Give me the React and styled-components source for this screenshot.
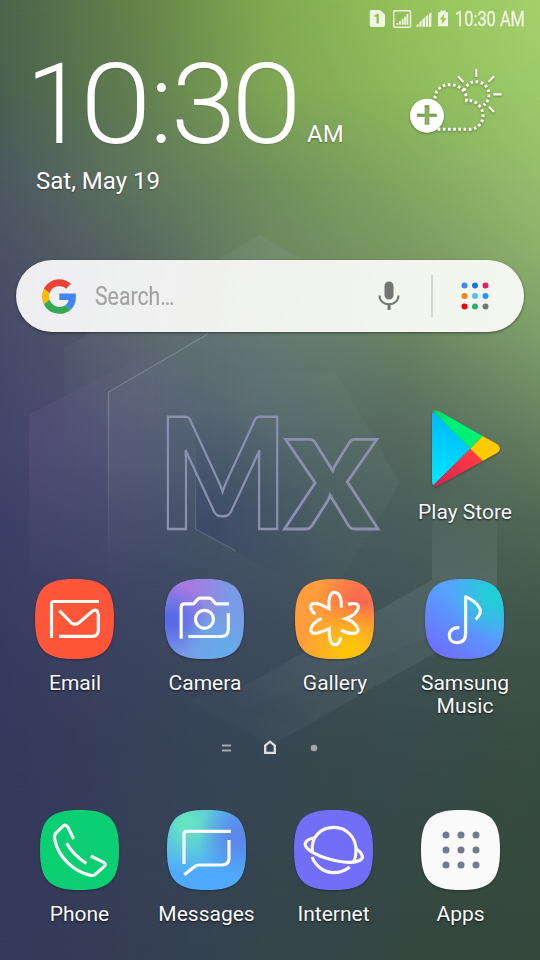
import React from 'react';
import styled, { createGlobalStyle } from 'styled-components';

const GlobalStyle = createGlobalStyle`
  *, *::before, *::after { box-sizing: border-box; }
  body { margin: 0; font-family: Roboto, "Liberation Sans", sans-serif; color: #fff; }
  svg { display: block; flex: none; overflow: visible; }
`;

/* ---------- page shell ---------- */

const Phone = styled.div`
  display: grid;
  width: 540px;
  height: 960px;
  overflow: hidden;
  isolation: isolate;
`;

const Wallpaper = styled.div`
  grid-area: 1 / 1;
  display: grid;
  width: 540px;
  height: 960px;
`;

const Band = styled.div`
  grid-area: 1 / 1;
  background: linear-gradient(to right, ${(p) => p.$colors.join(', ')});
  mask-image: linear-gradient(
    to bottom,
    ${(p) => (p.$from === null ? '#000, #000' : `transparent ${p.$from}px, #000 ${p.$to}px`)}
  );
`;

const WallpaperArt = styled.svg`
  grid-area: 1 / 1;
  z-index: 1;
`;

const Screen = styled.main`
  grid-area: 1 / 1;
  z-index: 2;
  display: flex;
  flex-direction: column;
  width: 540px;
  height: 960px;
`;

/* Colours across the width, at the height where the band is fully opaque. */
const bands = [
  { y: 0, colors: ['#4c644c', '#648349', '#81aa50', '#95c25b', '#a5d16c'] },
  { y: 90, colors: ['#4b614f', '#617f50', '#7fa654', '#8eba5a', '#9dca69'] },
  { y: 180, colors: ['#4c5862', '#5f755d', '#70905c', '#82a860', '#95bd6c'] },
  { y: 260, colors: ['#4b5065', '#576560', '#6b8762', '#799863', '#8cae6b'] },
  { y: 345, colors: ['#48486a', '#535d69', '#5b716b', '#678062', '#7b9b69'] },
  { y: 430, colors: ['#45456c', '#4c536e', '#52656a', '#576b60', '#65805f'] },
  { y: 520, colors: ['#3d3f68', '#444c6a', '#475966', '#4a5e5b', '#4f6853'] },
  { y: 620, colors: ['#383c63', '#3c4562', '#3e4d5e', '#405456', '#41574a'] },
  { y: 740, colors: ['#35395d', '#374159', '#384753', '#384b4b', '#384d42'] },
  { y: 960, colors: ['#34385a', '#353f55', '#34454b', '#344840', '#34483b'] },
];

function Background() {
  return (
    <Wallpaper aria-hidden="true">
      {bands.map((b, i) => (
        <Band key={b.y} $colors={b.colors} $from={i ? bands[i - 1].y : null} $to={b.y} />
      ))}
      <WallpaperArt width="540" height="960" viewBox="0 0 540 960" fill="none">
        <defs>
          <radialGradient id="fadeA" cx="200" cy="300" r="220" gradientUnits="userSpaceOnUse">
            <stop stopColor="#c0d4cc" stopOpacity=".09" />
            <stop offset=".5" stopColor="#b0c0cc" stopOpacity=".07" />
            <stop offset="1" stopColor="#8f9fc0" stopOpacity="0" />
          </radialGradient>
          <linearGradient id="fadeB" x1="29" y1="0" x2="200" y2="0" gradientUnits="userSpaceOnUse">
            <stop stopColor="#7c5f9c" stopOpacity=".2" />
            <stop offset="1" stopColor="#7c80a0" stopOpacity="0" />
          </linearGradient>
          <linearGradient id="fadeC" x1="108" y1="0" x2="230" y2="0" gradientUnits="userSpaceOnUse">
            <stop stopColor="#8fa3ae" stopOpacity=".08" />
            <stop offset="1" stopColor="#8fa3ae" stopOpacity="0" />
          </linearGradient>
          <linearGradient id="maskB" x1="0" y1="340" x2="0" y2="590" gradientUnits="userSpaceOnUse">
            <stop stopColor="#fff" />
            <stop offset=".5" stopColor="#fff" />
            <stop offset="1" stopColor="#000" />
          </linearGradient>
          <mask id="mB" maskUnits="userSpaceOnUse" x="0" y="200" width="540" height="500">
            <rect y="200" width="540" height="500" fill="url(#maskB)" />
          </mask>
          <linearGradient id="edge" x1="0" y1="330" x2="0" y2="560" gradientUnits="userSpaceOnUse">
            <stop stopColor="#b8c8c0" stopOpacity=".3" />
            <stop offset=".35" stopColor="#b8c8c0" stopOpacity=".3" />
            <stop offset="1" stopColor="#b8c8c0" stopOpacity="0" />
          </linearGradient>
          <linearGradient id="innerEdge" x1="0" y1="440" x2="0" y2="529" gradientUnits="userSpaceOnUse">
            <stop stopColor="#9aaab8" stopOpacity="0" />
            <stop offset="1" stopColor="#9aaab8" stopOpacity=".35" />
          </linearGradient>
          <radialGradient id="innerDark" cx="200" cy="525" r="120" gradientUnits="userSpaceOnUse">
            <stop stopColor="#303a68" stopOpacity=".32" />
            <stop offset="1" stopColor="#303a68" stopOpacity="0" />
          </radialGradient>
          <linearGradient id="innerLight" x1="250" y1="470" x2="370" y2="415" gradientUnits="userSpaceOnUse">
            <stop stopColor="#7c9a84" stopOpacity="0" />
            <stop offset="1" stopColor="#7c9a84" stopOpacity=".1" />
          </linearGradient>
          <linearGradient id="strap" x1="0" y1="490" x2="0" y2="575" gradientUnits="userSpaceOnUse">
            <stop stopColor="#8fa0a8" stopOpacity="0" />
            <stop offset="1" stopColor="#8fa0a8" stopOpacity=".19" />
          </linearGradient>
          <linearGradient id="strapLow" x1="490" y1="570" x2="230" y2="700" gradientUnits="userSpaceOnUse">
            <stop stopColor="#8fa0a8" stopOpacity=".19" />
            <stop offset=".7" stopColor="#8fa0a8" stopOpacity=".13" />
            <stop offset="1" stopColor="#8fa0a8" stopOpacity=".02" />
          </linearGradient>
        </defs>
        <path d="M260 235 64 348V580L260 700 456 580V348Z" fill="url(#fadeA)" />
        <g mask="url(#mB)">
          <path d="M29 415 250 300V620H29Z" fill="url(#fadeB)" />
          <path d="M108 392 230 322V620H108Z" fill="url(#fadeC)" />
        </g>
        <path d="M208 334 108.500 392V560" stroke="url(#edge)" strokeWidth="1.200" />
        <path d="M195.500 373H336L400 483 340 550 272 572 195.500 529Z" fill="url(#innerDark)" />
        <path d="M195.500 373H336L400 483 340 580 272 572 195.500 529Z" fill="url(#innerLight)" />
        <path d="M195.500 440V529L236 551" stroke="url(#innerEdge)" />
        <path d="M432 490H497V580H432Z" fill="url(#strap)" />
        <path d="M432 580H497V618L270 746 190 700 230 694Z" fill="url(#strapLow)" />
        <path d="M432 636 V655L300 728 240 710Z" fill="#303c48" opacity=".07" />
        <g
          fill="none"
          stroke="#8a90ae"
          strokeWidth="2.500"
          fontFamily="Lato"
          fontWeight="900"
          fontSize="157"
          strokeLinejoin="miter"
        >
          <text x="0" y="0" transform="translate(157.500 528.500) scale(.87 .985)">M</text>
          <text x="0" y="0" transform="translate(284.500 528.500) scale(1.120 1.100)">x</text>
        </g>
      </WallpaperArt>
    </Wallpaper>
  );
}

/* ---------- status bar ---------- */

const StatusBar = styled.header`
  display: flex;
  align-items: center;
  height: 38px;
  padding-left: 369px;
  color: #eff6e3;
`;

const StatusIcons = styled.div`
  display: flex;
  align-items: center;
  width: 86px;
`;

const Narrow = styled.span`
  display: inline-block;
  white-space: nowrap;
  transform: scaleX(${(p) => p.$scale});
  transform-origin: left center;
`;

const StatusTime = styled(Narrow)`
  font-size: 20px;
  line-height: 24px;
  -webkit-text-stroke: 0.3px #eff6e3;
`;

function StatusGlyphs() {
  return (
    <svg width="86" height="20" viewBox="0 0 86 20" fill="#eff6e3">
      <path fillRule="evenodd" d="M2.500 1H11L16 5.500V16Q16 18 14 18H2.500Q.7 18 .7 16V3Q.7 1 2.500 1ZM5.500 6V8L7.500 7.400V14.500H9.800V5H8.500Z" />
      <rect x="24.700" y="1.700" width="16.800" height="16.600" rx="1.500" fill="none" stroke="#eff6e3" strokeWidth="1.400" />
      <path d="M27.500 15.700V14H29.200V15.700ZM30 15.700V12.200H31.900V15.700ZM32.700 15.700V9.800H34.600V15.700ZM35.200 15.700V7.500H36.900V15.700ZM37.500 15.700V5H39.300V15.700Z" />
      <path d="M47.500 17.700V16L49.500 14.800V17.700ZM50.300 17.700V13.200L52.700 11.500V17.700ZM53.500 17.700V10.200L56 8.300V17.700ZM56.800 17.700V7.600L59.200 5.700V17.700ZM60 17.700V5L62.400 3.200V17.700Z" />
      <path fillRule="evenodd" d="M71.500 2V1.500H76.500V3.200H79V17.300H69V3.200H71.500ZM75.300 4.500 70.700 10.500H73.500L72.500 15.500 77.500 9.200H74.600Z" />
    </svg>
  );
}

/* ---------- clock and weather ---------- */

const ClockWidget = styled.section`
  display: flex;
  justify-content: space-between;
  height: 222px;
  padding: 0 38.5px 0 27px;
  text-shadow: 0 1px 2px rgba(0, 0, 0, 0.35);
`;

const ClockColumn = styled.div`
  display: flex;
  flex-direction: column;
`;

const TimeRow = styled.div`
  display: flex;
  align-items: baseline;
  height: 126px;
`;

const Time = styled.span`
  display: flex;
  width: 280px;
  padding-top: 2px;
  font-size: 110px;
  font-weight: 200;
  line-height: 130px;
  white-space: nowrap;
  -webkit-text-stroke: 1.9px #fff;
`;

const Digit = styled.span`
  flex: none;
  width: ${(p) => p.$width}px;
  transform: scaleX(${(p) => p.$stretch});
  transform-origin: left center;
`;

const Meridiem = styled.span`
  font-size: 24px;
`;

const DateText = styled.span`
  padding-left: 9px;
  font-size: 24px;
  line-height: 34px;
`;

const WeatherIcon = styled.svg`
  margin-top: 30px;
  filter: drop-shadow(0 1px 1px rgba(0, 0, 0, 0.35));
`;

const clockDigits = [
  { glyph: '1', width: 54, stretch: 0.95 },
  { glyph: '0', width: 70, stretch: 1.15 },
  { glyph: ':', width: 21, stretch: 1 },
  { glyph: '3', width: 60, stretch: 1.04 },
  { glyph: '0', width: 74, stretch: 1.14 },
];

function Weather() {
  return (
    <WeatherIcon width="92" height="66" viewBox="149 204 276 198" fill="none" stroke="#fff">
      <g strokeWidth="9" strokeDasharray="8 7.500">
        <path d="M224 296C225 268 246 253 270 254 290 254 308 266 316 282 318 290 319 296 319 302 340 298 367 316 368 346 369 370 350 388 326 388H232" />
        <path d="M311 272C318 254 332 245 347 245 371 245 386 264 386 284 386 298 380 309 370 315" />
      </g>
      <path strokeWidth="6.500" d="M348 207V231M293 229 309 246M401 229 385 245M399 283H424M386 320 401 336" />
      <path
        fill="#fff"
        stroke="none"
        fillRule="evenodd"
        d="M200 296A51 51 0 1 1 199.900 296ZM193 316V341H170V351H193V374H207V351H229V341H207V316Z"
      />
    </WeatherIcon>
  );
}

/* ---------- search ---------- */

const SearchBar = styled.section`
  display: flex;
  align-items: center;
  width: 508px;
  height: 72px;
  margin-left: 16px;
  border-radius: 36px;
  background: linear-gradient(100deg, #eeeef1, #f1f3ee 60%, #f4f7f0);
  box-shadow: 0 1px 3px rgba(0, 0, 0, 0.45);
`;

const SearchHint = styled.div`
  flex: none;
  width: 301px;
  padding-left: 18px;
  color: #a3a4a3;
  font-size: 25px;
  -webkit-text-stroke: 0.2px #a3a4a3;
`;

const Divider = styled.i`
  flex: none;
  width: 2px;
  height: 42px;
  margin: 0 28px 0 31px;
  background: #d5d6d4;
`;

const GoogleSlot = styled.div`
  flex: none;
  padding-left: 26px;
`;

const launcherDots = ['#4285f4', '#1976d2', '#e91e63', '#f57f17', '#4fc3f7', '#2196f3', '#f80000', '#2aae6c', '#757575'];

const Dots = ({ colors, start, step, r }) =>
  colors.map((c, i) => (
    <circle key={i} cx={start + (i % 3) * step} cy={start + Math.floor(i / 3) * step} r={r} fill={c} />
  ));

function Search() {
  return (
    <SearchBar>
      <GoogleSlot>
        <svg width="35" height="35" viewBox="0 0 48.500 48">
          <path fill="#EA4335" d="M24 9.500c3.540 0 6.710 1.220 9.210 3.600l6.850-6.850C35.900 2.380 30.470 0 24 0 14.620 0 6.510 5.380 2.560 13.220l7.980 6.190C12.430 13.720 17.740 9.500 24 9.500z" />
          <path fill="#4285F4" d="M46.980 24.550c0-1.570-.15-3.090-.38-4.550H24v9.020h12.940c-.58 2.960-2.260 5.480-4.780 7.180l7.730 6c4.510-4.180 7.090-10.360 7.090-17.650z" />
          <path fill="#FBBC05" d="M10.530 28.590c-.48-1.450-.76-2.990-.76-4.590s.27-3.140.76-4.590l-7.980-6.190C.92 16.460 0 20.120 0 24c0 3.880.92 7.540 2.560 10.780l7.970-6.190z" />
          <path fill="#34A853" d="M24 48c6.480 0 11.930-2.130 15.890-5.810l-7.730-6c-2.150 1.450-4.920 2.300-8.160 2.300-6.260 0-11.570-4.220-13.470-9.910l-7.980 6.190C6.510 42.620 14.620 48 24 48z" />
        </svg>
      </GoogleSlot>
      <SearchHint>
        <Narrow $scale={0.85}>Search…</Narrow>
      </SearchHint>
      <svg width="22" height="30" viewBox="0 0 22 30" fill="none" stroke="#757575">
        <rect x="6.500" y=".5" width="9" height="18" rx="4.500" fill="#757575" stroke="none" />
        <path strokeWidth="2" d="M1.500 14.500C1.500 20 6 23.300 11 23.300S20.500 20 20.500 14.500" />
        <path strokeWidth="3" d="M11 23V29" />
      </svg>
      <Divider />
      <svg width="28" height="28" viewBox="0 0 28 28">
        <Dots colors={launcherDots} start={3.500} step={10.500} r={3} />
      </svg>
    </SearchBar>
  );
}

/* ---------- apps ---------- */

const AppArea = styled.section`
  display: grid;
  grid-template-columns: repeat(4, 130px);
  grid-template-rows: 171px auto;
  height: 331px;
  padding: 76px 0 0 10px;
`;

const Dock = styled.nav`
  display: grid;
  grid-template-columns: repeat(4, 127px);
  padding-left: 16px;
`;

const AppTile = styled.a`
  display: flex;
  flex-direction: column;
  align-items: center;
  grid-column: ${(p) => p.$column || 'auto'};
  color: #fafafa;
`;

const AppLabel = styled.span`
  margin-top: 13px;
  font-size: 21px;
  line-height: 23px;
  text-align: center;
  text-shadow: 0 1px 2px rgba(0, 0, 0, 0.75);
`;

const IconSvg = styled.svg`
  filter: drop-shadow(0 1px 1px rgba(0, 0, 0, 0.3));
`;

const SQUIRCLE =
  'M119 0C210 0 237 29 237 120S210 240 119 240 0 211 0 120 28 0 119 0Z';

function Squircle({ fill, defs, children }) {
  return (
    <IconSvg width="80" height="80" viewBox="0 0 240 240" fill="none">
      <defs>{defs}</defs>
      {[].concat(fill).map((f) => (
        <path key={f} d={SQUIRCLE} fill={f} />
      ))}
      <g stroke="#fafafa" strokeWidth="9.500">{children}</g>
    </IconSvg>
  );
}

const Glow = ({ id, cx, cy, r, color }) => (
  <radialGradient id={id} cx={cx} cy={cy} r={r} gradientUnits="userSpaceOnUse">
    <stop stopColor={color} />
    <stop offset=".15" stopColor={color} />
    <stop offset="1" stopColor={color} stopOpacity="0" />
  </radialGradient>
);

const PlayStoreIcon = () => (
  <IconSvg width="80" height="80" viewBox="75 54 240 240">
    <defs>
      <linearGradient id="playBlue" x1="160" y1="80" x2="110" y2="260" gradientUnits="userSpaceOnUse">
        <stop stopColor="#00b8fd" />
        <stop offset="1" stopColor="#00e2ff" />
      </linearGradient>
      <linearGradient id="playRed" x1="220" y1="190" x2="110" y2="290" gradientUnits="userSpaceOnUse">
        <stop stopColor="#ff3a44" />
        <stop offset="1" stopColor="#d4234f" />
      </linearGradient>
      <linearGradient id="playGreen" x1="105" y1="64" x2="140" y2="90" gradientUnits="userSpaceOnUse">
        <stop stopColor="#13cd66" />
        <stop offset="1" stopColor="#00f076" />
      </linearGradient>
    </defs>
    <path fill="url(#playBlue)" d="M100 65 212 176 100 286Q96 283 96 277V73Q96 68 100 65Z" />
    <path fill="url(#playGreen)" d="M100 65Q108 59 118 64L248 138 211 176Z" />
    <path fill="url(#playRed)" d="M211 176 248 213 118 285Q107 292 100 286Z" />
    <path fill="#ffca00" d="M248 138 292 163Q308 175 292 188L248 213 211 176Z" />
  </IconSvg>
);

const EmailIcon = () => (
  <Squircle fill="#ff5539">
    <path d="M49.500 177V74Q49.500 67.500 56 67.500H192" />
    <path d="M72 172H171Q190 172 190 152V108Q188 88 174 95L132 131Q120 140 108 131L73 95" />
  </Squircle>
);

const CameraIcon = () => (
  <Squircle
    fill={['#7a9be6', 'url(#camPurple)', 'url(#camBlue)', 'url(#camSky)']}
    defs={
      <>
        <Glow id="camPurple" cx="60" cy="25" r="140" color="#a67ae0" />
        <Glow id="camBlue" cx="20" cy="125" r="110" color="#5a6ae6" />
        <Glow id="camSky" cx="175" cy="215" r="130" color="#66a9e8" />
      </>
    }
  >
    <path d="M48.500 179V84Q48.500 74.500 58 74.500H84Q87 74.500 90 70L97 62Q101 57.500 105 57.500H132Q137 57.500 140 61L148 70Q151 74.500 155 74.500H192" />
    <path d="M70 172.500H168Q190 172.500 190 151V102" />
    <circle cx="118.500" cy="121" r="27" />
  </Squircle>
);

const GalleryIcon = () => (
  <Squircle
    fill={['#ff9c3c', 'url(#galRed)', 'url(#galYellow)']}
    defs={
      <>
        <Glow id="galRed" cx="195" cy="65" r="130" color="#fb6a50" />
        <Glow id="galYellow" cx="165" cy="220" r="155" color="#ffc40a" />
      </>
    }
  >
    <g transform="translate(-45 -42)">
      <path d="M106 148C88 135 88 115 102 115 118 114 134 124 147 131 144 104 150 82 163 82 179 82 186 103 184 128" />
      <path d="M204 118C218 114 238 114 235 128 231 144 214 155 197 161 214 167 230 176 234 193 236 210 206 208 183 195" />
      <path d="M125 160C104 169 90 185 93 198 98 212 124 202 148 191 146 215 152 239 164 239 174 239 182 229 181 217" />
    </g>
  </Squircle>
);

const MusicIcon = () => (
  <Squircle
    fill={['url(#musBase)', 'url(#musTeal)']}
    defs={
      <>
        <linearGradient id="musBase" x1="30" y1="230" x2="140" y2="80" gradientUnits="userSpaceOnUse">
          <stop stopColor="#706cff" />
          <stop offset="1" stopColor="#54a5fd" />
        </linearGradient>
        <Glow id="musTeal" cx="210" cy="45" r="135" color="#20cfd5" />
      </>
    }
  >
    <g transform="translate(-435 -42)" strokeLinejoin="round">
      <path d="M538 188C520 187 508 196 508 212 508 224 517 233 530 233 547 233 557 223 557 205V95C575 104 591 112 600 132 605 145 597 154 587 163" />
    </g>
  </Squircle>
);

const PhoneIcon = () => (
  <Squircle fill="#0ccf74">
    <g transform="translate(-60 -240)">
      <path d="M161 327 144 292Q137 281 128 289L109 308Q101 316 105 331C115 380 160 425 212 436Q221 438 227 432L252 410Q260 403 251 397L212 378" />
      <path d="M140 340Q160 376 199 400" />
    </g>
  </Squircle>
);

const MessagesIcon = () => (
  <Squircle
    fill={['#4faafd', 'url(#msgGreen)', 'url(#msgBlue)']}
    defs={
      <>
        <Glow id="msgGreen" cx="60" cy="40" r="150" color="#66e2c4" />
        <Glow id="msgBlue" cx="215" cy="80" r="120" color="#5b88e9" />
      </>
    }
  >
    <g transform="translate(-441 -240)">
      <path d="M492 402V312Q492 304 500 304H633" />
      <path d="M627 330V385Q627 405 607 405H537Q530 405 525 409L493 434" />
    </g>
  </Squircle>
);

const InternetIcon = () => (
  <Squircle fill="#736ef7">
    <g transform="translate(-72 -240)">
      <path d="M127 364C122 322 152 292 191 292 231 292 259 324 258 362 258 375 256 386 251 396" />
      <path d="M134 324C108 326 98 342 112 355 135 378 200 398 240 397 270 396 283 386 275 374 272 367 266 361 259 356" />
      <path d="M126 381C138 411 165 428 191 428 210 428 225 422 239 411" />
    </g>
  </Squircle>
);

const AppsIcon = () => (
  <Squircle fill="#fafafa">
    <g stroke="none">
      <Dots colors={Array(9).fill('#737990')} start={75} step={45} r={10.500} />
    </g>
  </Squircle>
);

function LauncherApp({ icon, label, column }) {
  return (
    <AppTile $column={column}>
      {icon}
      <AppLabel>{label}</AppLabel>
    </AppTile>
  );
}

/* ---------- page indicator ---------- */

const PageIndicator = styled.div`
  display: flex;
  justify-content: center;
  align-items: center;
  height: 147px;
  padding-top: 22px;
`;

/* ---------- screen ---------- */

export default function App() {
  return (
    <Phone>
      <GlobalStyle />
      <Background />
      <Screen>
        <StatusBar>
          <StatusIcons>
            <StatusGlyphs />
          </StatusIcons>
          <StatusTime $scale={0.82}>10:30 AM</StatusTime>
        </StatusBar>
        <ClockWidget>
          <ClockColumn>
            <TimeRow>
              <Time>
                {clockDigits.map((d, i) => (
                  <Digit key={i} $width={d.width} $stretch={d.stretch}>{d.glyph}</Digit>
                ))}
              </Time>
              <Meridiem>AM</Meridiem>
            </TimeRow>
            <DateText>Sat, May 19</DateText>
          </ClockColumn>
          <Weather />
        </ClockWidget>
        <Search />
        <AppArea>
          <LauncherApp column={4} icon={<PlayStoreIcon />} label="Play Store" />
          <LauncherApp column={1} icon={<EmailIcon />} label="Email" />
          <LauncherApp icon={<CameraIcon />} label="Camera" />
          <LauncherApp icon={<GalleryIcon />} label="Gallery" />
          <LauncherApp icon={<MusicIcon />} label="Samsung Music" />
        </AppArea>
        <PageIndicator>
          <svg width="98" height="16" viewBox="221 740 98 16" fill="none">
            <path d="M222 745.500H231M222 750.500H231" stroke="#a2a8b0" strokeWidth="2" />
            <path d="M265.200 752.800V745.500L270 741.700 274.800 745.500V752.800Z" stroke="#dfe2e4" strokeWidth="2.300" />
            <circle cx="314" cy="748" r="3.300" fill="#a2a8b0" />
          </svg>
        </PageIndicator>
        <Dock>
          <LauncherApp icon={<PhoneIcon />} label="Phone" />
          <LauncherApp icon={<MessagesIcon />} label="Messages" />
          <LauncherApp icon={<InternetIcon />} label="Internet" />
          <LauncherApp icon={<AppsIcon />} label="Apps" />
        </Dock>
      </Screen>
    </Phone>
  );
}
